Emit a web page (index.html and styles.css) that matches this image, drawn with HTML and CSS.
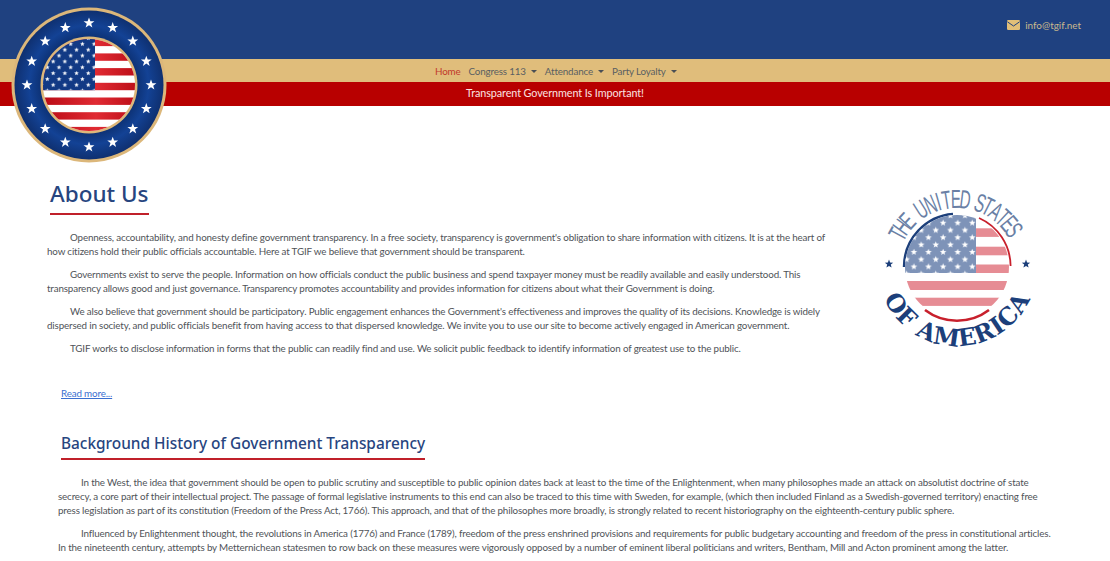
FILE: index.html
```html
<!DOCTYPE html>
<html lang="en">
<head>
<meta charset="utf-8">
<title>TGIF - About Us</title>
<link rel="stylesheet" href="styles.css">
</head>
<body>
<header class="site-header">
  <div class="top-bar">
    <a class="mail" href="#">
      <svg class="mail-icon" viewBox="0 0 13 10" width="13" height="10" aria-hidden="true">
        <rect width="13" height="10" rx="1.2" fill="#e2bf78"/>
        <path d="M0.4 1.8 L6.5 6 L12.6 1.8" fill="none" stroke="#1f4180" stroke-width="1"/>
      </svg>
      <span>info@tgif.net</span>
    </a>
  </div>
  <nav class="nav-bar">
    <a class="nav-link active" href="#">Home</a>
    <a class="nav-link caret" href="#">Congress 113</a>
    <a class="nav-link caret" href="#">Attendance</a>
    <a class="nav-link caret" href="#">Party Loyalty</a>
  </nav>
  <div class="slogan">Transparent Government Is Important!</div>
  <svg class="seal" viewBox="0 0 156 156" width="156" height="156" aria-hidden="true">
    <defs>
      <polygon id="st" points="0,-5.6 1.4,-1.8 5.4,-1.7 2.2,0.7 3.4,4.6 0,2.3 -3.4,4.6 -2.2,0.7 -5.4,-1.7 -1.4,-1.8" fill="#fff"/>
      <polygon id="sm" points="0,-2.4 .6,-.8 2.3,-.7 1,.3 1.4,2 0,1 -1.4,2 -1,.3 -2.3,-.7 -.6,-.8" fill="#fff"/>
      <radialGradient id="ring" cx="50%" cy="50%" r="50%">
        <stop offset="0.62" stop-color="#0c2f70"/>
        <stop offset="0.8" stop-color="#134295"/>
        <stop offset="1" stop-color="#0f3070"/>
      </radialGradient>
      <clipPath id="flagclip"><circle cx="78" cy="78" r="46"/></clipPath>
      <pattern id="cantonstars" x="33" y="69" width="11.7" height="11.7" patternUnits="userSpaceOnUse">
        <use href="#sm" x="3.3" y="3.1"/>
        <use href="#sm" x="9.15" y="8.95"/>
      </pattern>
      <linearGradient id="redstripe" x1="0" x2="1" y1="0" y2="0">
        <stop offset="0" stop-color="#b80a14"/>
        <stop offset="0.55" stop-color="#e02b33"/>
        <stop offset="1" stop-color="#b80a14"/>
      </linearGradient>
    </defs>
    <circle cx="78" cy="78" r="77.5" fill="#dcb77a"/>
    <circle cx="78" cy="78" r="74.5" fill="url(#ring)"/>
    <circle cx="78" cy="78" r="48.5" fill="#dcb77a"/>
    <circle cx="78" cy="78" r="46" fill="#fff"/>
    <g clip-path="url(#flagclip)">
      <rect x="30" y="31.7" width="100" height="7.4" fill="url(#redstripe)"/>
      <rect x="30" y="46.4" width="100" height="7.4" fill="url(#redstripe)"/>
      <rect x="30" y="61.1" width="100" height="7.4" fill="url(#redstripe)"/>
      <rect x="30" y="75.8" width="100" height="7.4" fill="url(#redstripe)"/>
      <rect x="30" y="90.5" width="100" height="7.4" fill="url(#redstripe)"/>
      <rect x="30" y="105.2" width="100" height="7.4" fill="url(#redstripe)"/>
      <rect x="30" y="119.9" width="100" height="7.4" fill="url(#redstripe)"/>
      <rect x="30" y="30" width="54" height="53.2" fill="#123a85"/>
      <rect x="30" y="30" width="54" height="53.2" fill="url(#cantonstars)"/>
    </g>
    <g>
      <use href="#st" transform="translate(78 16)"/>
      <use href="#st" transform="translate(101.7 20.7)"/>
      <use href="#st" transform="translate(121.8 34.2)"/>
      <use href="#st" transform="translate(135.3 54.3)"/>
      <use href="#st" transform="translate(140 78)"/>
      <use href="#st" transform="translate(135.3 101.7)"/>
      <use href="#st" transform="translate(121.8 121.8)"/>
      <use href="#st" transform="translate(101.7 135.3)"/>
      <use href="#st" transform="translate(78 140)"/>
      <use href="#st" transform="translate(54.3 135.3)"/>
      <use href="#st" transform="translate(34.2 121.8)"/>
      <use href="#st" transform="translate(20.7 101.7)"/>
      <use href="#st" transform="translate(16 78)"/>
      <use href="#st" transform="translate(20.7 54.3)"/>
      <use href="#st" transform="translate(34.2 34.2)"/>
      <use href="#st" transform="translate(54.3 20.7)"/>
    </g>
  </svg>
</header>

<main class="content">
  <section class="about">
    <div class="about-text">
      <h1 class="page-title">About Us</h1>
      <p>Openness, accountability, and honesty define government transparency. In a free society, transparency is government's obligation to share information with citizens. It is at the heart of how citizens hold their public officials accountable. Here at TGIF we believe that government should be transparent.</p>
      <p>Governments exist to serve the people. Information on how officials conduct the public business and spend taxpayer money must be readily available and easily understood. This transparency allows good and just governance. Transparency promotes accountability and provides information for citizens about what their Government is doing.</p>
      <p>We also believe that government should be participatory. Public engagement enhances the Government's effectiveness and improves the quality of its decisions. Knowledge is widely dispersed in society, and public officials benefit from having access to that dispersed knowledge. We invite you to use our site to become actively engaged in American government.</p>
      <p>TGIF works to disclose information in forms that the public can readily find and use. We solicit public feedback to identify information of greatest use to the public.</p>
    </div>
    <svg class="usa-logo" viewBox="0 0 156 170" width="156" height="170" role="img" aria-label="The United States of America">
      <defs>
        <clipPath id="disc"><circle cx="78" cy="83" r="52"/></clipPath>
        <polygon id="ws" points="0,-3.4 .9,-1.1 3.3,-1 1.4,.5 2,2.8 0,1.5 -2,2.8 -1.4,.5 -3.3,-1 -.9,-1.1" fill="#fff"/>
        <polygon id="bs" points="0,-4.4 1.1,-1.4 4.2,-1.3 1.8,.6 2.6,3.6 0,1.9 -2.6,3.6 -1.8,.6 -4.2,-1.3 -1.1,-1.4" fill="#1c3f7a"/>
        <pattern id="cs" x="24" y="28" width="14.6" height="14.6" patternUnits="userSpaceOnUse">
          <use href="#ws" x="3.6" y="3.6"/>
          <use href="#ws" x="10.9" y="10.9"/>
        </pattern>
        <path id="arcBottom" d="M 3.8 112 A 80 80 0 0 0 152.2 112"/>
      </defs>
      <path d="M 25 83 A 53 53 0 0 1 74 30" fill="none" stroke="#1c3f7a" stroke-width="2.4"/>
      <path d="M 100 34 A 53 53 0 0 1 131.6 82" fill="none" stroke="#c8202c" stroke-width="1.8"/>
      <path d="M 46 126 A 53 53 0 0 0 110 126" fill="none" stroke="#c8202c" stroke-width="2.6"/>
      <g clip-path="url(#disc)">
        <rect x="96" y="26" width="50" height="5.5" fill="#e68c94"/>
        <rect x="96" y="44.3" width="50" height="8.6" fill="#e68c94"/>
        <rect x="96" y="62.7" width="50" height="8.6" fill="#e68c94"/>
        <rect x="96" y="80.5" width="50" height="8.5" fill="#e68c94"/>
        <rect x="20" y="97" width="120" height="9" fill="#e68c94"/>
        <rect x="20" y="113.7" width="120" height="8.2" fill="#e68c94"/>
        <rect x="20" y="28" width="77" height="61" fill="#7e93b8"/>
        <rect x="24" y="28" width="73" height="61" fill="url(#cs)"/>
      </g>
      <g class="logo-top">
        <text transform="rotate(-61 78 83) translate(78 24) scale(.58 1)">T</text>
        <text transform="rotate(-54 78 83) translate(78 24) scale(.58 1)">H</text>
        <text transform="rotate(-47 78 83) translate(78 24) scale(.58 1)">E</text>
        <text transform="rotate(-32 78 83) translate(78 24) scale(.58 1)">U</text>
        <text transform="rotate(-23 78 83) translate(78 24) scale(.58 1)">N</text>
        <text transform="rotate(-16 78 83) translate(78 24) scale(.58 1)">I</text>
        <text transform="rotate(-9 78 83) translate(78 24) scale(.58 1)">T</text>
        <text transform="rotate(-1 78 83) translate(78 24) scale(.58 1)">E</text>
        <text transform="rotate(7 78 83) translate(78 24) scale(.58 1)">D</text>
        <text transform="rotate(20 78 83) translate(78 24) scale(.58 1)">S</text>
        <text transform="rotate(27 78 83) translate(78 24) scale(.58 1)">T</text>
        <text transform="rotate(35 78 83) translate(78 24) scale(.58 1)">A</text>
        <text transform="rotate(43 78 83) translate(78 24) scale(.58 1)">T</text>
        <text transform="rotate(50 78 83) translate(78 24) scale(.58 1)">E</text>
        <text transform="rotate(57 78 83) translate(78 24) scale(.58 1)">S</text>
      </g>
      <text class="logo-bottom"><textPath href="#arcBottom" startOffset="50%" text-anchor="middle">OF AMERICA</textPath></text>
      <use href="#bs" x="10" y="80"/>
      <use href="#bs" x="147" y="80"/>
    </svg>
  </section>

  <a class="read-more" href="#">Read more...</a>

  <section class="history">
    <h2 class="section-title">Background History of Government Transparency</h2>
    <p>In the West, the idea that government should be open to public scrutiny and susceptible to public opinion dates back at least to the time of the Enlightenment, when many philosophes made an attack on absolutist doctrine of state secrecy, a core part of their intellectual project. The passage of formal legislative instruments to this end can also be traced to this time with Sweden, for example, (which then included Finland as a Swedish-governed territory) enacting free press legislation as part of its constitution (Freedom of the Press Act, 1766). This approach, and that of the philosophes more broadly, is strongly related to recent historiography on the eighteenth-century public sphere.</p>
    <p>Influenced by Enlightenment thought, the revolutions in America (1776) and France (1789), freedom of the press enshrined provisions and requirements for public budgetary accounting and freedom of the press in constitutional articles. In the nineteenth century, attempts by Metternichean statesmen to row back on these measures were vigorously opposed by a number of eminent liberal politicians and writers, Bentham, Mill and Acton prominent among the latter.</p>
  </section>
</main>
</body>
</html>
```

FILE: styles.css
```css
* { box-sizing: border-box; }
html, body { margin: 0; padding: 0; }
body {
  font-family: "Lato", "Noto Sans", sans-serif;
  font-size: 9.8px;
  letter-spacing: -0.15px;
  line-height: 14px;
  color: #4f5358;
  background: #fff;
  overflow: hidden;
  height: 561px;
}
a { text-decoration: none; }

.site-header { position: relative; }
.top-bar {
  height: 59px;
  background: #1f4180;
  display: flex;
  justify-content: flex-end;
  align-items: flex-start;
  padding: 18px 29px 0 0;
}
.mail { display: flex; align-items: center; gap: 5px; color: #c9b98e; font-size: 9.9px; letter-spacing: 0; }
.nav-bar {
  height: 23px;
  background: #e0bd7b;
  display: flex;
  justify-content: flex-start;
  align-items: center;
  gap: 8px;
  padding-left: 435px;
}
.nav-link { color: #5a5f62; font-size: 9.8px; }
.nav-link.active { color: #c0392b; }
.caret::after {
  content: "";
  display: inline-block;
  margin-left: 5px;
  vertical-align: 2px;
  border-top: 3.5px solid #4a4f55;
  border-left: 3.5px solid transparent;
  border-right: 3.5px solid transparent;
}
.slogan {
  height: 24px;
  background: #b80000;
  color: #fbe3e0;
  font-size: 10.8px;
  letter-spacing: -0.08px;
  line-height: 22px;
  text-align: center;
}
.seal { position: absolute; left: 11px; top: 7px; }

.content { padding: 0 60px 0 47px; }
.about { display: flex; justify-content: space-between; align-items: flex-start; }
.about-text { width: 785px; }
.page-title {
  display: inline-block;
  margin: 71px 0 15px 3px;
  padding-bottom: 3px;
  border-bottom: 2px solid #c0202a;
  font-family: "Noto Sans", sans-serif;
  font-size: 22.5px;
  letter-spacing: 0;
  line-height: 33px;
  font-weight: 500;
  color: #27457f;
}
.about-text p, .history p { margin: 0 0 9px; text-indent: 23px; }
.usa-logo { margin: 78px 15px 0 0; overflow: visible; }

.read-more {
  display: block;
  margin: 22px 0 0 14px;
  color: #3a6fd0;
  text-decoration: underline;
}
.history { margin: 33px -3px 0 11px; }
.section-title {
  display: inline-block;
  margin: 0 0 15px 3px;
  padding-bottom: 3px;
  border-bottom: 2px solid #c0202a;
  font-family: "Noto Sans", sans-serif;
  font-size: 15.4px;
  letter-spacing: 0;
  line-height: 22px;
  font-weight: 500;
  color: #27457f;
}
.logo-top text { font-family: "Liberation Sans", sans-serif; font-size: 26px; letter-spacing: 0; text-anchor: middle; fill: #6a7fa5; }
.logo-bottom { font-family: "DejaVu Serif", serif; font-weight: 700; font-size: 24px; letter-spacing: 0.6px; fill: #1c3f7a; }
```
